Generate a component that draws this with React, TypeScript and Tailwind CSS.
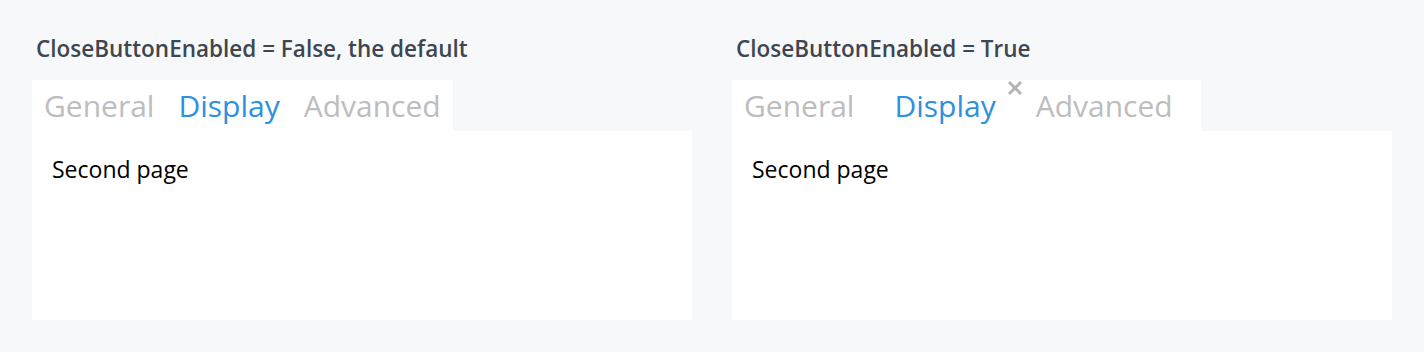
type PanelProps = {
  title: string;
  closable?: boolean;
};

type TabProps = {
  label: string;
  active?: boolean;
  closable?: boolean;
};

const font = { fontFamily: "'Open Sans', 'Noto Sans', sans-serif" };

function CloseIcon() {
  return (
    <svg
      viewBox="0 0 16 16"
      className="absolute right-[1px] top-0 h-[16px] w-[16px] text-[#b4b4b4]"
      fill="none"
      stroke="currentColor"
      strokeWidth={3}
    >
      <path d="M2 2 L14 14 M14 2 L2 14" />
    </svg>
  );
}

function Tab({ label, active, closable }: TabProps) {
  return (
    <div className={`relative flex h-full items-center pl-3 ${closable ? "pr-[28px]" : "pr-3"}`}>
      <span className={active ? "text-[#2f8fe0]" : "text-[#bdbdbd]"}>{label}</span>
      {closable && active && <CloseIcon />}
    </div>
  );
}

function Panel({ title, closable }: PanelProps) {
  return (
    <div className="flex w-[660px] flex-col">
      <div className="h-[46px] pl-1 text-[22.5px] font-semibold leading-[30px] text-[#3f4650]">{title}</div>
      <div className="flex h-[51px]">
        <div className="flex h-full bg-white text-[30px] leading-none">
          <Tab label="General" closable={closable} />
          <Tab label="Display" active closable={closable} />
          <Tab label="Advanced" closable={closable} />
        </div>
      </div>
      <div className="h-[189px] bg-white px-5 pt-[23px] text-[23px] leading-[30px] text-black">Second page</div>
    </div>
  );
}

export default function App() {
  return (
    <div className="flex h-[352px] w-full gap-10 bg-[#f7f8fa] px-8 pt-[34px]" style={font}>
      <Panel title="CloseButtonEnabled = False, the default" />
      <Panel title="CloseButtonEnabled = True" closable />
    </div>
  );
}
